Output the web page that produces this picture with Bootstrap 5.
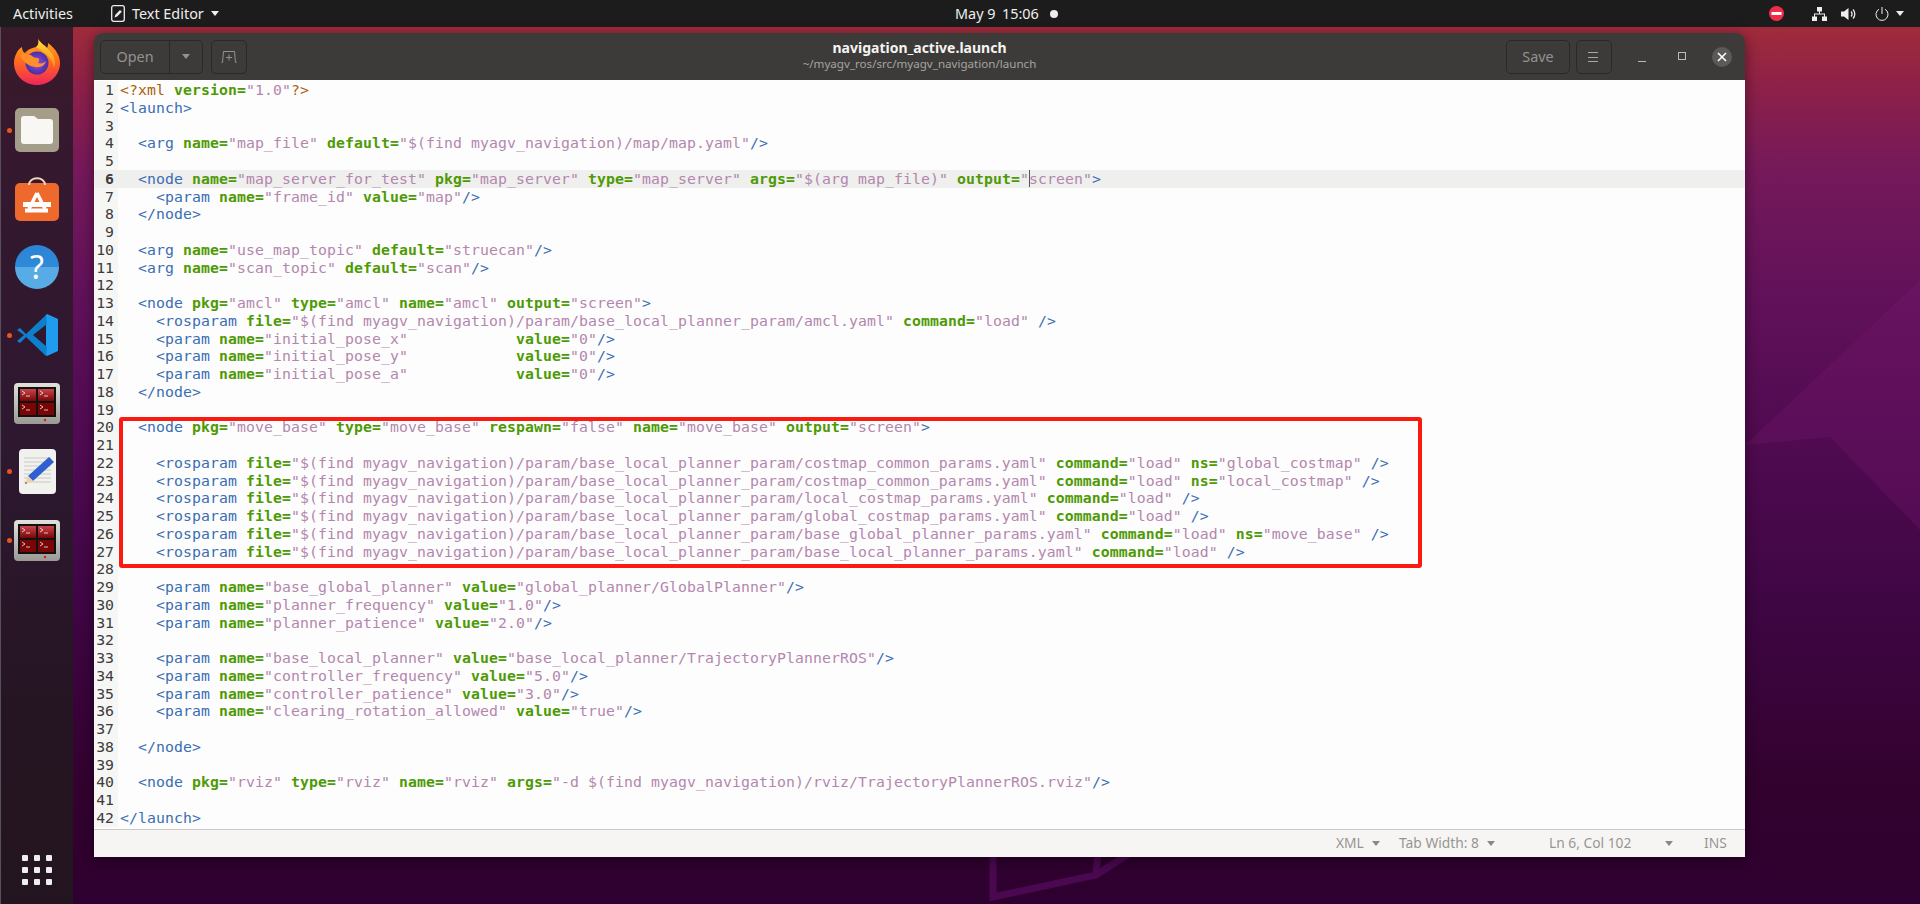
<!DOCTYPE html>
<html lang="en">
<head>
<meta charset="utf-8">
<title>navigation_active.launch</title>
<link href="https://cdn.jsdelivr.net/npm/bootstrap@5.3.0/dist/css/bootstrap.min.css" rel="stylesheet">
<style>
html,body{height:904px;overflow:hidden}
body{font-family:"Noto Sans","Open Sans",sans-serif;background:linear-gradient(180deg,#a02b3a 27px,#8c2049 90px,#75195a 170px,#61115a 300px,#520b52 420px,#3f0644 600px,#33022f 780px,#2e002f 904px);position:relative}
.wall{position:absolute;left:0;top:0;width:1920px;height:904px;z-index:0}
.shell{position:relative;z-index:1;height:904px}
.topbar{height:27px;background:#1c1c1c;color:#eee;font-size:14.4px;line-height:27px}
.tb-act{margin-left:13px;width:98px}
.tb-app{width:844px}
.tb-app svg{margin-right:7px}
.tri{display:inline-block;width:0;height:0;border-left:4.5px solid transparent;border-right:4.5px solid transparent;border-top:5px solid currentColor}
.tb-app .tri{margin-left:7px}
.tb-date{width:47px;white-space:nowrap}
.tb-time{width:48px;white-space:nowrap}
.clock-dot{width:8px;height:8px;border-radius:50%;background:#eee}
.tb-right{margin-right:16px}
.dock{width:73px;background:linear-gradient(180deg,#3b1a2b 0,#33182f 180px,#2d1830 420px,#251522 700px,#231520 877px);border-left:1px solid #55505a;position:relative}
.dock-item{height:68.3px;position:relative}
.run-dot{position:absolute;left:6px;top:50%;width:5px;height:5px;margin-top:-2.5px;border-radius:50%;background:#e95420}
.help-ic{width:44px;height:44px;border-radius:50%;background:linear-gradient(180deg,#2b84d4,#2f8ad8 50%,#58ace6 50%,#58ace6);color:#fff;font-size:32px;line-height:44px;text-align:center}
.apps-grid{display:grid;grid-template-columns:repeat(3,6px);gap:6px;margin:auto auto 19px auto}
.apps-grid span{width:6px;height:6px;border-radius:1px;background:#eee}
.stage{padding:6px 175px 47px 21px}
.gwin{border-radius:9px 9px 0 0;box-shadow:0 3px 14px rgba(0,0,0,.45);overflow:hidden}
.hdr{height:47px;background:#3d3b39;padding:0 13px 0 6px;position:relative}
.gbtn.btn{height:34px;font-size:14.4px;color:#949290;background:#3d3b39;border:1px solid #2a2928;border-radius:5px;padding:0;display:flex;align-items:center;justify-content:center;--bs-btn-hover-bg:#3d3b39}
.b-open{width:70px;border-radius:5px 0 0 5px!important}
.b-drop{width:34px;border-radius:0 5px 5px 0!important;margin-left:-1px}
.b-new{width:36px;margin-left:8px}
.b-save{width:64px}
.b-menu{width:36px;margin-left:6px}
.hdr-title{position:absolute;left:0;right:0;top:7px;text-align:center;line-height:16px}
.ttl{font-size:14px;font-weight:700;color:#f4f4f3}
.sub{font-size:11.6px;color:#a5a3a1}
.wbtn{display:flex;align-items:center;justify-content:center}
.w-min{margin-left:26px;width:8px;height:8px;border-bottom:1px solid #bbb;margin-top:3px}
.w-max{margin-left:32px;width:8px;height:8px;border:1px solid #bbb;margin-top:-1px}
.w-close{margin-left:26px;width:20px;height:20px;border-radius:50%;background:#5b5a58}
.edt{background:#fdfdfd;position:relative;padding-top:1px}
.ln{height:17.76px;line-height:17.76px;display:flex;font-family:"DejaVu Sans Mono",monospace;font-size:14.8px}
.gn{width:24px;flex:none;background:#f6f6f5;text-align:right;padding-right:4px;color:#3c3c3c}
.cd{padding-left:2px;white-space:pre;color:#3a6db3;flex:1;letter-spacing:.09px}
.cd b{color:#4e9a06;font-weight:700}
.cd i{color:#b387ad;font-style:normal}
.cd u{color:#a8610c;text-decoration:none}
.ln.cur,.ln.cur .gn{background:#efefee}
.ln.cur .gn{font-weight:700}
.caret-bar{display:inline-block;width:0;height:17px;border-left:1px solid #555;margin-right:-1px;vertical-align:top}
.redbox{position:absolute;left:25px;top:337px;width:1303px;height:151px;border:4px solid #fb1a10;border-radius:3px;pointer-events:none}
.stat{height:28px;background:#f6f5f4;border-top:1px solid #cdc9c6;color:#979593;font-size:13.8px;line-height:26px}
.stat .tri{margin-left:8px;color:#8a8886;vertical-align:2px}
.s1{margin-left:1242px;width:63px}
.s2{width:150px}
.s3{width:155px}
</style>
</head>
<body>
<svg class="wall" viewBox="0 0 1920 904" aria-hidden="true">
<path d="M1745 445 1920 280V530L1830 437Z" fill="#7a1a70" opacity=".28"/>
<path d="M993 850V897L1096 875 1135 850M1098 850 1096 875" fill="none" stroke="#4a0850" stroke-width="7"/>
</svg>
<div class="shell d-flex flex-column">
  <div class="topbar d-flex align-items-center">
    <div class="tb-act">Activities</div>
    <div class="tb-app d-flex align-items-center">
      <svg width="14" height="17" viewBox="0 0 14 17"><rect x=".7" y=".7" width="12.6" height="15.6" rx="2" fill="none" stroke="#eee" stroke-width="1.3"/><path d="M3.5 12.5 4.4 9.8 9 5l1.8 1.8-4.6 4.8z" fill="#eee"/></svg>
      <span>Text Editor</span><span class="tri"></span>
    </div>
    <div class="tb-date">May 9</div>
    <div class="tb-time">15:06</div>
    <div class="clock-dot"></div>
    <div class="tb-right ms-auto d-flex align-items-center">
      <svg width="15" height="15" viewBox="0 0 15 15" class="me-4"><circle cx="7.5" cy="7.5" r="7.5" fill="#ef2d48"/><rect x="2.5" y="6" width="10" height="3" fill="#fff"/></svg>
      <svg width="15" height="14" viewBox="0 0 15 14" class="ms-1"><path d="M5 0h5v4.500H5zM0 9.500h5V14H0zM10 9.500h5V14h-5zM7 4.500h1v2h5v3h-1V7.500H3v2H2v-3h5z" fill="#eee"/></svg>
      <svg width="16" height="14" viewBox="0 0 16 14" style="margin-left:14px"><path d="M0 4.500h3L7.500 1v12L3 9.500H0z" fill="#eee"/><path d="M10 4.500a3.500 3.500 0 0 1 0 5M12 2.500a6.500 6.500 0 0 1 0 9" fill="none" stroke="#eee" stroke-width="1.300"/></svg>
      <svg width="14" height="14" viewBox="0 0 14 14" style="margin-left:18px"><path d="M4 2.200a6 6 0 1 0 6 0M7 0v7" fill="none" stroke="#eee" stroke-width="1"/></svg>
      <span class="tri" style="margin-left:7px"></span>
    </div>
  </div>
  <div class="d-flex flex-grow-1">
    <div class="dock d-flex flex-column">
      <div class="dock-item d-flex align-items-center justify-content-center" style="margin-top:.8px">
        <svg width="46" height="47" viewBox="0 0 46 47"><defs><linearGradient id="ff" x1="0" y1="0" x2="0" y2="1"><stop offset="0" stop-color="#ffb01f"/><stop offset=".5" stop-color="#ff6a1f"/><stop offset="1" stop-color="#f0245c"/></linearGradient><linearGradient id="fy" x1="0" y1="0" x2="0" y2="1"><stop offset="0" stop-color="#ffe23a"/><stop offset="1" stop-color="#ff8a1c"/></linearGradient><radialGradient id="fp"><stop offset="0" stop-color="#8d4de8"/><stop offset="1" stop-color="#4a2fa0"/></radialGradient></defs><path d="M24 0c1 4 5 6 9 10 1-2 1-3 1-5 8 6 12 13 12 20 0 12-10 22-23 22S0 37 0 25C0 18 4 11 8 9c0 3 1 5 3 6 2-3 6-5 11-6 3-2 3-6 2-9z" fill="url(#ff)"/><path d="M24 0c1 4 5 6 9 10 6 6 10 12 7 20-1-9-9-16-18-21 3-2 3-6 2-9z" fill="url(#fy)"/><circle cx="23" cy="25" r="11.500" fill="url(#fp)"/><path d="M6 17c3 7 8 11 15 12 6 1 10-2 11-6-2 2-5 3-8 2 1-2 2-4 0-5-4 0-6-2-7-3-3 0-5-2-7-1-1 0-3 0-4 1z" fill="#ff8f2a"/></svg>
      </div>
      <div class="dock-item d-flex align-items-center justify-content-center">
        <span class="run-dot"></span>
        <svg width="44" height="44" viewBox="0 0 44 44"><rect width="44" height="44" rx="5" fill="#a49d8a"/><path d="M6 11a3 3 0 0 1 3-3h10l4 3h12a3 3 0 0 1 3 3v19a3 3 0 0 1-3 3H9a3 3 0 0 1-3-3z" fill="#f8f7f3"/></svg>
      </div>
      <div class="dock-item d-flex align-items-center justify-content-center">
        <svg width="44" height="44" viewBox="0 0 44 44"><rect y="6" width="44" height="38" rx="5" fill="#ee6a2c"/><path d="M14 8c0-9 16-9 16 0" fill="none" stroke="#f2d9c6" stroke-width="2"/><path d="M22 16 14 32M22 16 30 32" stroke="#fff" stroke-width="3.500"/><path d="M8 25h28v5H8zM10 31.500h23v4H10z" fill="#fff"/></svg>
      </div>
      <div class="dock-item d-flex align-items-center justify-content-center">
        <div class="help-ic">?</div>
      </div>
      <div class="dock-item d-flex align-items-center justify-content-center">
        <span class="run-dot"></span>
        <svg width="42" height="42" viewBox="0 0 42 42"><path d="M31 0 42 5v32l-11 5-1-1V1z" fill="#1f9cf0"/><path d="M30 1 10 20 4 14 1 16l7 5-7 6 3 2 6-6 20 19 1-9L17 21 31 10z" fill="#0e7fcb"/></svg>
      </div>
      <div class="dock-item d-flex align-items-center justify-content-center">
        <svg width="46" height="41" viewBox="0 0 46 41"><defs><linearGradient id="tf" x1="0" y1="0" x2="0" y2="1"><stop offset="0" stop-color="#e2e2dc"/><stop offset="1" stop-color="#9a9a94"/></linearGradient><linearGradient id="tp" x1="0" y1="0" x2="0" y2="1"><stop offset="0" stop-color="#c9454d"/><stop offset="1" stop-color="#7a0505"/></linearGradient></defs><rect width="46" height="41" rx="4" fill="url(#tf)"/><rect x="4" y="4" width="38" height="30" fill="#111"/><rect x="6" y="6" width="16" height="12" fill="url(#tp)"/><rect x="24" y="6" width="16" height="12" fill="url(#tp)"/><rect x="6" y="20" width="16" height="12" fill="#7a0505"/><rect x="24" y="20" width="16" height="12" fill="#7a0505"/><path d="M8 8l3 2-3 2M12 13h4M26 8l3 2-3 2M30 13h4M8 22l3 2-3 2M12 27h4M26 22l3 2-3 2M30 27h4" fill="none" stroke="#eee" stroke-width=".8"/><circle cx="31" cy="37" r="1.200" fill="#e11"/></svg>
      </div>
      <div class="dock-item d-flex align-items-center justify-content-center">
        <span class="run-dot"></span>
        <svg width="37" height="45" viewBox="0 0 37 45"><rect width="37" height="45" rx="4" fill="#f1f1ee"/><path d="M5 9h27M5 13h27M5 17h27M5 21h27M5 25h27M5 29h27M5 33h27" stroke="#c9c9c6"/><path d="M30 8 35 13 14 32 9 27z" fill="#2f5fd0"/><path d="M9 27l5 5-8 3z" fill="#f2cfa4"/><path d="M7 33 6 35l2-.8z" fill="#333"/></svg>
      </div>
      <div class="dock-item d-flex align-items-center justify-content-center">
        <span class="run-dot"></span>
        <svg width="46" height="41" viewBox="0 0 46 41"><rect width="46" height="41" rx="4" fill="url(#tf)"/><rect x="4" y="4" width="38" height="30" fill="#111"/><rect x="6" y="6" width="16" height="12" fill="url(#tp)"/><rect x="24" y="6" width="16" height="12" fill="url(#tp)"/><rect x="6" y="20" width="16" height="12" fill="#7a0505"/><rect x="24" y="20" width="16" height="12" fill="#7a0505"/><path d="M8 8l3 2-3 2M12 13h4M26 8l3 2-3 2M30 13h4M8 22l3 2-3 2M12 27h4M26 22l3 2-3 2M30 27h4" fill="none" stroke="#eee" stroke-width=".8"/><circle cx="31" cy="37" r="1.200" fill="#e11"/></svg>
      </div>
      <div class="apps-grid"><span></span><span></span><span></span><span></span><span></span><span></span><span></span><span></span><span></span></div>
    </div>
    <div class="stage flex-grow-1 d-flex">
      <div class="gwin flex-grow-1 d-flex flex-column">
        <div class="hdr d-flex align-items-center">
          <div class="hdr-title"><div class="ttl">navigation_active.launch</div><div class="sub">~/myagv_ros/src/myagv_navigation/launch</div></div>
          <div class="btn gbtn b-open">Open</div>
          <div class="btn gbtn b-drop"><span class="tri"></span></div>
          <div class="btn gbtn b-new"><svg width="16" height="12" viewBox="0 0 16 12"><path d="M.5 11.500h1l1-11h11l1 11h1" fill="none" stroke="#949290"/><path d="M8 3.500v6M5 6.500h6" stroke="#949290"/></svg></div>
          <div class="btn gbtn b-save ms-auto">Save</div>
          <div class="btn gbtn b-menu"><svg width="14" height="12" viewBox="0 0 14 12"><path d="M1 1.500h10M1 6.500h10M1 10.500h10" stroke="#a8a6a4" stroke-width="1"/></svg></div>
          <div class="w-min"></div>
          <div class="w-max"></div>
          <div class="w-close wbtn"><svg width="10" height="10" viewBox="0 0 10 10"><path d="M1 1l8 8M9 1 1 9" stroke="#fff" stroke-width="1.600"/></svg></div>
        </div>
        <div class="edt flex-grow-1">
<div class="ln"><span class="gn">1</span><span class="cd"><u>&lt;?xml</u> <b>version=</b><i>"1.0"</i><u>?&gt;</u></span></div>
<div class="ln"><span class="gn">2</span><span class="cd">&lt;launch&gt;</span></div>
<div class="ln"><span class="gn">3</span><span class="cd"></span></div>
<div class="ln"><span class="gn">4</span><span class="cd">  &lt;arg <b>name=</b><i>"map_file"</i> <b>default=</b><i>"$(find myagv_navigation)/map/map.yaml"</i>/&gt;</span></div>
<div class="ln"><span class="gn">5</span><span class="cd"></span></div>
<div class="ln cur"><span class="gn">6</span><span class="cd">  &lt;node <b>name=</b><i>"map_server_for_test"</i> <b>pkg=</b><i>"map_server"</i> <b>type=</b><i>"map_server"</i> <b>args=</b><i>"$(arg map_file)"</i> <b>output=</b><i>"<span class="caret-bar"></span>screen"</i>&gt;</span></div>
<div class="ln"><span class="gn">7</span><span class="cd">    &lt;param <b>name=</b><i>"frame_id"</i> <b>value=</b><i>"map"</i>/&gt;</span></div>
<div class="ln"><span class="gn">8</span><span class="cd">  &lt;/node&gt;</span></div>
<div class="ln"><span class="gn">9</span><span class="cd"></span></div>
<div class="ln"><span class="gn">10</span><span class="cd">  &lt;arg <b>name=</b><i>"use_map_topic"</i> <b>default=</b><i>"struecan"</i>/&gt;</span></div>
<div class="ln"><span class="gn">11</span><span class="cd">  &lt;arg <b>name=</b><i>"scan_topic"</i> <b>default=</b><i>"scan"</i>/&gt;</span></div>
<div class="ln"><span class="gn">12</span><span class="cd"></span></div>
<div class="ln"><span class="gn">13</span><span class="cd">  &lt;node <b>pkg=</b><i>"amcl"</i> <b>type=</b><i>"amcl"</i> <b>name=</b><i>"amcl"</i> <b>output=</b><i>"screen"</i>&gt;</span></div>
<div class="ln"><span class="gn">14</span><span class="cd">    &lt;rosparam <b>file=</b><i>"$(find myagv_navigation)/param/base_local_planner_param/amcl.yaml"</i> <b>command=</b><i>"load"</i> /&gt;</span></div>
<div class="ln"><span class="gn">15</span><span class="cd">    &lt;param <b>name=</b><i>"initial_pose_x"</i>            <b>value=</b><i>"0"</i>/&gt;</span></div>
<div class="ln"><span class="gn">16</span><span class="cd">    &lt;param <b>name=</b><i>"initial_pose_y"</i>            <b>value=</b><i>"0"</i>/&gt;</span></div>
<div class="ln"><span class="gn">17</span><span class="cd">    &lt;param <b>name=</b><i>"initial_pose_a"</i>            <b>value=</b><i>"0"</i>/&gt;</span></div>
<div class="ln"><span class="gn">18</span><span class="cd">  &lt;/node&gt;</span></div>
<div class="ln"><span class="gn">19</span><span class="cd"></span></div>
<div class="ln"><span class="gn">20</span><span class="cd">  &lt;node <b>pkg=</b><i>"move_base"</i> <b>type=</b><i>"move_base"</i> <b>respawn=</b><i>"false"</i> <b>name=</b><i>"move_base"</i> <b>output=</b><i>"screen"</i>&gt;</span></div>
<div class="ln"><span class="gn">21</span><span class="cd"></span></div>
<div class="ln"><span class="gn">22</span><span class="cd">    &lt;rosparam <b>file=</b><i>"$(find myagv_navigation)/param/base_local_planner_param/costmap_common_params.yaml"</i> <b>command=</b><i>"load"</i> <b>ns=</b><i>"global_costmap"</i> /&gt;</span></div>
<div class="ln"><span class="gn">23</span><span class="cd">    &lt;rosparam <b>file=</b><i>"$(find myagv_navigation)/param/base_local_planner_param/costmap_common_params.yaml"</i> <b>command=</b><i>"load"</i> <b>ns=</b><i>"local_costmap"</i> /&gt;</span></div>
<div class="ln"><span class="gn">24</span><span class="cd">    &lt;rosparam <b>file=</b><i>"$(find myagv_navigation)/param/base_local_planner_param/local_costmap_params.yaml"</i> <b>command=</b><i>"load"</i> /&gt;</span></div>
<div class="ln"><span class="gn">25</span><span class="cd">    &lt;rosparam <b>file=</b><i>"$(find myagv_navigation)/param/base_local_planner_param/global_costmap_params.yaml"</i> <b>command=</b><i>"load"</i> /&gt;</span></div>
<div class="ln"><span class="gn">26</span><span class="cd">    &lt;rosparam <b>file=</b><i>"$(find myagv_navigation)/param/base_local_planner_param/base_global_planner_params.yaml"</i> <b>command=</b><i>"load"</i> <b>ns=</b><i>"move_base"</i> /&gt;</span></div>
<div class="ln"><span class="gn">27</span><span class="cd">    &lt;rosparam <b>file=</b><i>"$(find myagv_navigation)/param/base_local_planner_param/base_local_planner_params.yaml"</i> <b>command=</b><i>"load"</i> /&gt;</span></div>
<div class="ln"><span class="gn">28</span><span class="cd"></span></div>
<div class="ln"><span class="gn">29</span><span class="cd">    &lt;param <b>name=</b><i>"base_global_planner"</i> <b>value=</b><i>"global_planner/GlobalPlanner"</i>/&gt;</span></div>
<div class="ln"><span class="gn">30</span><span class="cd">    &lt;param <b>name=</b><i>"planner_frequency"</i> <b>value=</b><i>"1.0"</i>/&gt;</span></div>
<div class="ln"><span class="gn">31</span><span class="cd">    &lt;param <b>name=</b><i>"planner_patience"</i> <b>value=</b><i>"2.0"</i>/&gt;</span></div>
<div class="ln"><span class="gn">32</span><span class="cd"></span></div>
<div class="ln"><span class="gn">33</span><span class="cd">    &lt;param <b>name=</b><i>"base_local_planner"</i> <b>value=</b><i>"base_local_planner/TrajectoryPlannerROS"</i>/&gt;</span></div>
<div class="ln"><span class="gn">34</span><span class="cd">    &lt;param <b>name=</b><i>"controller_frequency"</i> <b>value=</b><i>"5.0"</i>/&gt;</span></div>
<div class="ln"><span class="gn">35</span><span class="cd">    &lt;param <b>name=</b><i>"controller_patience"</i> <b>value=</b><i>"3.0"</i>/&gt;</span></div>
<div class="ln"><span class="gn">36</span><span class="cd">    &lt;param <b>name=</b><i>"clearing_rotation_allowed"</i> <b>value=</b><i>"true"</i>/&gt;</span></div>
<div class="ln"><span class="gn">37</span><span class="cd"></span></div>
<div class="ln"><span class="gn">38</span><span class="cd">  &lt;/node&gt;</span></div>
<div class="ln"><span class="gn">39</span><span class="cd"></span></div>
<div class="ln"><span class="gn">40</span><span class="cd">  &lt;node <b>pkg=</b><i>"rviz"</i> <b>type=</b><i>"rviz"</i> <b>name=</b><i>"rviz"</i> <b>args=</b><i>"-d $(find myagv_navigation)/rviz/TrajectoryPlannerROS.rviz"</i>/&gt;</span></div>
<div class="ln"><span class="gn">41</span><span class="cd"></span></div>
<div class="ln"><span class="gn">42</span><span class="cd">&lt;/launch&gt;</span></div>
          <div class="redbox"></div>
        </div>
        <div class="stat d-flex">
          <div class="s1">XML<span class="tri"></span></div>
          <div class="s2">Tab Width: 8<span class="tri"></span></div>
          <div class="s3">Ln 6, Col 102<span class="tri" style="margin-left:34px"></span></div>
          <div>INS</div>
        </div>
      </div>
    </div>
  </div>
</div>
<script src="https://cdn.jsdelivr.net/npm/bootstrap@5.3.0/dist/js/bootstrap.bundle.min.js"></script>
</body>
</html>
